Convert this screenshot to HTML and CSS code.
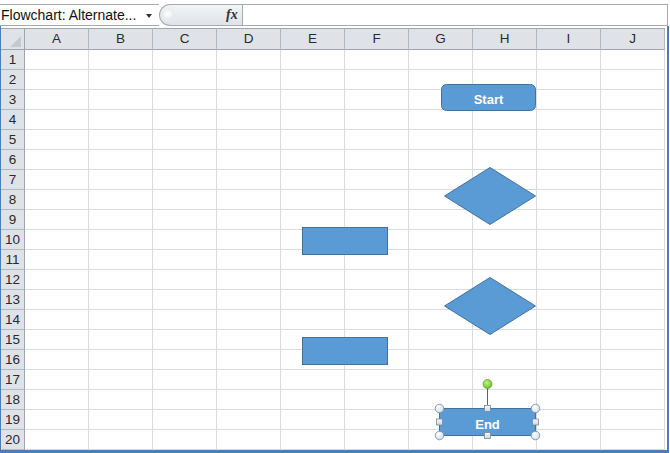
FILE: index.html
```html
<!DOCTYPE html>
<html>
<head>
<meta charset="utf-8">
<link rel="stylesheet" href="styles.css">
</head>
<body>
<div class="app">
  <div class="fbar">
    <div class="namebox"><span class="nametext">Flowchart: Alternate...</span><span class="dd"></span></div>
    <div class="pill"><span class="knob"></span><span class="fx">fx</span></div>
    <div class="finput"></div>
  </div>
  <div class="sheet">
    <div class="grid">
      <div class="corner"></div><div class="ch">A</div><div class="ch">B</div><div class="ch">C</div><div class="ch">D</div><div class="ch">E</div><div class="ch">F</div><div class="ch">G</div><div class="ch">H</div><div class="ch">I</div><div class="ch">J</div>
      <div class="rh">1</div><div class="c"></div><div class="c"></div><div class="c"></div><div class="c"></div><div class="c"></div><div class="c"></div><div class="c"></div><div class="c"></div><div class="c"></div><div class="c"></div>
      <div class="rh">2</div><div class="c"></div><div class="c"></div><div class="c"></div><div class="c"></div><div class="c"></div><div class="c"></div><div class="c"></div><div class="c"></div><div class="c"></div><div class="c"></div>
      <div class="rh">3</div><div class="c"></div><div class="c"></div><div class="c"></div><div class="c"></div><div class="c"></div><div class="c"></div><div class="c"></div><div class="c"></div><div class="c"></div><div class="c"></div>
      <div class="rh">4</div><div class="c"></div><div class="c"></div><div class="c"></div><div class="c"></div><div class="c"></div><div class="c"></div><div class="c"></div><div class="c"></div><div class="c"></div><div class="c"></div>
      <div class="rh">5</div><div class="c"></div><div class="c"></div><div class="c"></div><div class="c"></div><div class="c"></div><div class="c"></div><div class="c"></div><div class="c"></div><div class="c"></div><div class="c"></div>
      <div class="rh">6</div><div class="c"></div><div class="c"></div><div class="c"></div><div class="c"></div><div class="c"></div><div class="c"></div><div class="c"></div><div class="c"></div><div class="c"></div><div class="c"></div>
      <div class="rh">7</div><div class="c"></div><div class="c"></div><div class="c"></div><div class="c"></div><div class="c"></div><div class="c"></div><div class="c"></div><div class="c"></div><div class="c"></div><div class="c"></div>
      <div class="rh">8</div><div class="c"></div><div class="c"></div><div class="c"></div><div class="c"></div><div class="c"></div><div class="c"></div><div class="c"></div><div class="c"></div><div class="c"></div><div class="c"></div>
      <div class="rh">9</div><div class="c"></div><div class="c"></div><div class="c"></div><div class="c"></div><div class="c"></div><div class="c"></div><div class="c"></div><div class="c"></div><div class="c"></div><div class="c"></div>
      <div class="rh">10</div><div class="c"></div><div class="c"></div><div class="c"></div><div class="c"></div><div class="c"></div><div class="c"></div><div class="c"></div><div class="c"></div><div class="c"></div><div class="c"></div>
      <div class="rh">11</div><div class="c"></div><div class="c"></div><div class="c"></div><div class="c"></div><div class="c"></div><div class="c"></div><div class="c"></div><div class="c"></div><div class="c"></div><div class="c"></div>
      <div class="rh">12</div><div class="c"></div><div class="c"></div><div class="c"></div><div class="c"></div><div class="c"></div><div class="c"></div><div class="c"></div><div class="c"></div><div class="c"></div><div class="c"></div>
      <div class="rh">13</div><div class="c"></div><div class="c"></div><div class="c"></div><div class="c"></div><div class="c"></div><div class="c"></div><div class="c"></div><div class="c"></div><div class="c"></div><div class="c"></div>
      <div class="rh">14</div><div class="c"></div><div class="c"></div><div class="c"></div><div class="c"></div><div class="c"></div><div class="c"></div><div class="c"></div><div class="c"></div><div class="c"></div><div class="c"></div>
      <div class="rh">15</div><div class="c"></div><div class="c"></div><div class="c"></div><div class="c"></div><div class="c"></div><div class="c"></div><div class="c"></div><div class="c"></div><div class="c"></div><div class="c"></div>
      <div class="rh">16</div><div class="c"></div><div class="c"></div><div class="c"></div><div class="c"></div><div class="c"></div><div class="c"></div><div class="c"></div><div class="c"></div><div class="c"></div><div class="c"></div>
      <div class="rh">17</div><div class="c"></div><div class="c"></div><div class="c"></div><div class="c"></div><div class="c"></div><div class="c"></div><div class="c"></div><div class="c"></div><div class="c"></div><div class="c"></div>
      <div class="rh">18</div><div class="c"></div><div class="c"></div><div class="c"></div><div class="c"></div><div class="c"></div><div class="c"></div><div class="c"></div><div class="c"></div><div class="c"></div><div class="c"></div>
      <div class="rh">19</div><div class="c"></div><div class="c"></div><div class="c"></div><div class="c"></div><div class="c"></div><div class="c"></div><div class="c"></div><div class="c"></div><div class="c"></div><div class="c"></div>
      <div class="rh">20</div><div class="c"></div><div class="c"></div><div class="c"></div><div class="c"></div><div class="c"></div><div class="c"></div><div class="c"></div><div class="c"></div><div class="c"></div><div class="c"></div>
    </div>
  </div>
  <svg class="shapes" width="670" height="453" viewBox="0 0 670 453" xmlns="http://www.w3.org/2000/svg">
    <defs>
      <radialGradient id="hg" cx="0.4" cy="0.35" r="0.7">
        <stop offset="0" stop-color="#ffffff"/>
        <stop offset="1" stop-color="#c9dcea"/>
      </radialGradient>
      <linearGradient id="sq" x1="0" y1="0" x2="0" y2="1">
        <stop offset="0" stop-color="#f4f9fd"/>
        <stop offset="1" stop-color="#c3d9ea"/>
      </linearGradient>
      <radialGradient id="gg" cx="0.4" cy="0.35" r="0.7">
        <stop offset="0" stop-color="#c4f08a"/>
        <stop offset="1" stop-color="#62c21c"/>
      </radialGradient>
    </defs>
    <rect class="shape" x="441.5" y="84.5" width="94" height="26" rx="5" ry="5"/>
    <text class="label" x="488.5" y="103.5">Start</text>
    <polygon class="shape" points="444.5,196 490,167.5 535.5,196 490,224.5"/>
    <polygon class="shape" points="444.5,306 490,277.5 535.5,306 490,334.5"/>
    <rect class="shape" x="302.5" y="227.5" width="85" height="27"/>
    <rect class="shape" x="302.5" y="337.5" width="85" height="27"/>
    <rect class="shape" x="439.5" y="408.5" width="96" height="27" rx="2" ry="2"/>
    <text class="label" x="487.5" y="428.5">End</text>
    <line x1="487.5" y1="388" x2="487.5" y2="405" stroke="#5a6470" stroke-width="1"/>
    <circle cx="487.5" cy="384" r="4.5" fill="url(#gg)" stroke="#6a9a40" stroke-width="0.8"/>
    <circle cx="439.5" cy="408.5" r="4.3" fill="url(#hg)" stroke="#7d8892" stroke-width="0.8"/>
    <circle cx="535.5" cy="408.5" r="4.3" fill="url(#hg)" stroke="#7d8892" stroke-width="0.8"/>
    <circle cx="439.5" cy="435.5" r="4.3" fill="url(#hg)" stroke="#7d8892" stroke-width="0.8"/>
    <circle cx="535.5" cy="435.5" r="4.3" fill="url(#hg)" stroke="#7d8892" stroke-width="0.8"/>
    <rect x="484.5" y="405.5" width="6" height="6" fill="url(#sq)" stroke="#7d8892" stroke-width="0.8"/>
    <rect x="484.5" y="432.5" width="6" height="6" fill="url(#sq)" stroke="#7d8892" stroke-width="0.8"/>
    <rect x="436.5" y="419" width="6" height="6" fill="url(#sq)" stroke="#7d8892" stroke-width="0.8"/>
    <rect x="532.5" y="419" width="6" height="6" fill="url(#sq)" stroke="#7d8892" stroke-width="0.8"/>
  </svg>
</div>
</body>
</html>
```
FILE: styles.css
```css
html, body {
  margin: 0;
  padding: 0;
  background: #ffffff;
  overflow: hidden;
}
.app {
  position: relative;
  width: 670px;
  height: 453px;
  background: #ffffff;
  font-family: "Liberation Sans", Arial, sans-serif;
  color: #222;
}
.fbar {
  display: flex;
  height: 22px;
  padding-top: 4px;
  width: 668px;
}
.namebox {
  width: 159px;
  height: 20px;
  border-top: 1px solid #a7abb0;
  border-bottom: 1px solid #a7abb0;
  display: flex;
  align-items: center;
  position: relative;
}
.nametext {
  font-size: 14px;
  color: #111;
  padding-left: 1px;
  white-space: nowrap;
  line-height: 20px;
}
.dd {
  position: absolute;
  left: 146px;
  top: 9px;
  width: 0;
  height: 0;
  border-left: 3.5px solid transparent;
  border-right: 3.5px solid transparent;
  border-top: 4px solid #333;
}
.pill {
  width: 82px;
  height: 20px;
  border: 1px solid #a7abb0;
  border-right: none;
  border-radius: 11px 0 0 11px;
  background: linear-gradient(#f2f4f7, #dfe3e8);
  position: relative;
}
.knob {
  position: absolute;
  left: 3px;
  top: 4px;
  width: 12px;
  height: 12px;
  border-radius: 50%;
  background: radial-gradient(circle at 40% 40%, #ffffff, #d6dbe1);
  box-shadow: 0 0 0 1px #e9ecef;
}
.fx {
  position: absolute;
  left: 66px;
  top: 2px;
  font-family: "Liberation Serif", "Times New Roman", serif;
  font-style: italic;
  font-weight: bold;
  font-size: 14px;
  color: #333;
  line-height: 16px;
}
.finput {
  flex: 1;
  height: 20px;
  border: 1px solid #a7abb0;
  background: #fff;
}
.sheet {
  width: 666px;
  padding-top: 2px;
  border-left: 1px solid #4a7ebb;
  border-right: 2px solid #4a7ebb;
  border-bottom: 3px solid #4a7ebb;
  box-sizing: content-box;
  height: 422px;
}
.grid {
  display: grid;
  grid-template-columns: 24px repeat(10, 64px);
  grid-template-rows: 22px repeat(20, 20px);
  width: 664px;
}
.corner, .ch, .rh, .c {
  box-sizing: border-box;
}
.corner {
  background: #dfe3e8;
  border-top: 1px solid #9ea5ad;
  border-bottom: 1px solid #9ea5ad;
  border-right: 1px solid #9ea5ad;
  position: relative;
}
.corner::after {
  content: "";
  position: absolute;
  right: 3px;
  bottom: 2px;
  width: 11px;
  height: 11px;
  background: #c4c9d0;
  clip-path: polygon(100% 0, 100% 100%, 0 100%);
}
.ch {
  background: #dfe3e8;
  border-top: 1px solid #9ea5ad;
  border-bottom: 1px solid #9ea5ad;
  border-right: 1px solid #b3b9c1;
  font-size: 13.5px;
  color: #2a2a2a;
  display: flex;
  align-items: center;
  justify-content: center;
  line-height: 20px;
}
.rh {
  background: #dfe3e8;
  border-right: 1px solid #9ea5ad;
  border-bottom: 1px solid #b3b9c1;
  font-size: 13.5px;
  color: #2a2a2a;
  display: flex;
  align-items: center;
  justify-content: center;
  line-height: 19px;
}
.c {
  border-right: 1px solid #d9dbdd;
  border-bottom: 1px solid #d9dbdd;
  background: #fff;
}
.shapes {
  position: absolute;
  left: 0;
  top: 0;
  pointer-events: none;
}
.shape {
  fill: #5b9bd5;
  stroke: #41719c;
  stroke-width: 1;
}
.label {
  fill: #ffffff;
  font-family: "Liberation Sans", Arial, sans-serif;
  font-weight: bold;
  font-size: 13px;
  text-anchor: middle;
}
```
